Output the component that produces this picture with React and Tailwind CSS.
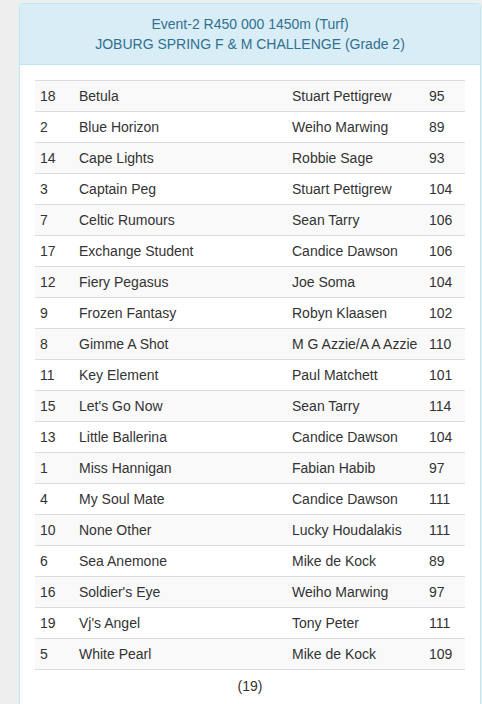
const rows = [
  ["18", "Betula", "Stuart Pettigrew", "95"],
  ["2", "Blue Horizon", "Weiho Marwing", "89"],
  ["14", "Cape Lights", "Robbie Sage", "93"],
  ["3", "Captain Peg", "Stuart Pettigrew", "104"],
  ["7", "Celtic Rumours", "Sean Tarry", "106"],
  ["17", "Exchange Student", "Candice Dawson", "106"],
  ["12", "Fiery Pegasus", "Joe Soma", "104"],
  ["9", "Frozen Fantasy", "Robyn Klaasen", "102"],
  ["8", "Gimme A Shot", "M G Azzie/A A Azzie", "110"],
  ["11", "Key Element", "Paul Matchett", "101"],
  ["15", "Let's Go Now", "Sean Tarry", "114"],
  ["13", "Little Ballerina", "Candice Dawson", "104"],
  ["1", "Miss Hannigan", "Fabian Habib", "97"],
  ["4", "My Soul Mate", "Candice Dawson", "111"],
  ["10", "None Other", "Lucky Houdalakis", "111"],
  ["6", "Sea Anemone", "Mike de Kock", "89"],
  ["16", "Soldier's Eye", "Weiho Marwing", "97"],
  ["19", "Vj's Angel", "Tony Peter", "111"],
  ["5", "White Pearl", "Mike de Kock", "109"],
];

export default function App() {
  return (
    <div
      className="min-h-[704px] bg-[#eeeeee] pl-[19px] pr-px pt-[3px] text-[14px] leading-[20px] text-[#333333]"
      style={{ fontFamily: '"Liberation Sans", Arial, Helvetica, sans-serif' }}
    >
      <div className="min-h-[720px] rounded-t-[4px] border border-[#bce8f1] bg-white">
        <div className="rounded-t-[3px] border-b border-[#bce8f1] bg-[#d9edf7] px-[15px] py-[10px] text-center text-[#31708f]">
          <div>Event-2 R450 000 1450m (Turf)</div>
          <div>JOBURG SPRING F &amp; M CHALLENGE (Grade 2)</div>
        </div>
        <div className="px-[15px] pt-[15px]">
          <table className="w-full table-fixed border-collapse border-b border-[#dddddd]">
            <colgroup>
              <col className="w-[39px]" />
              <col className="w-[213px]" />
              <col className="w-[137px]" />
              <col />
            </colgroup>
            <tbody>
              {rows.map((r, i) => (
                <tr
                  key={i}
                  className={i % 2 === 0 ? "bg-[#f9f9f9]" : "bg-white"}
                >
                  {r.map((c, j) => (
                    <td
                      key={j}
                      className="whitespace-nowrap border-t border-[#dddddd] p-[5px] align-top"
                    >
                      {c}
                    </td>
                  ))}
                </tr>
              ))}
            </tbody>
          </table>
          <div className="pt-[6px] text-center">(19)</div>
        </div>
      </div>
    </div>
  );
}
